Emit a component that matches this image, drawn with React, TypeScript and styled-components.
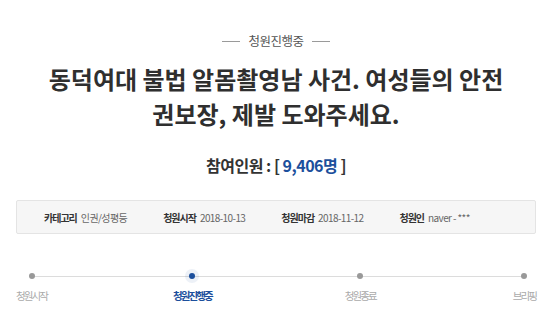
import React from "react";
import styled, { createGlobalStyle } from "styled-components";

const Global = createGlobalStyle`
  html, body { margin: 0; padding: 0; background: #fff; }
  body { font-family: "Noto Sans CJK KR", "Noto Sans", sans-serif; color: #333; }
`;

const Page = styled.div`
  width: 550px;
  height: 330px;
  box-sizing: border-box;
  padding: 0 14px 0 16px;
  display: flex;
  flex-direction: column;
  align-items: stretch;
  overflow: hidden;
`;

const Status = styled.div`
  margin-top: 31px;
  display: flex;
  align-items: center;
  justify-content: center;
  gap: 8px;
  font-size: 12.5px;
  line-height: 20px;
  color: #555;
  letter-spacing: -0.5px;
`;

const Dash = styled.span`
  width: 18px;
  height: 1px;
  background: #9a9a9a;
`;

const Title = styled.h1`
  margin: 10px 0 0;
  text-align: center;
  font-size: 24px;
  line-height: 35px;
  font-weight: 700;
  letter-spacing: 0;
  color: #2f2f2f;
`;

const Count = styled.div`
  margin-top: 22px;
  text-align: center;
  font-size: 16px;
  line-height: 24px;
  font-weight: 700;
  letter-spacing: -0.5px;
  color: #333;
`;

const Num = styled.span`
  color: #1c4f9c;
`;

const InfoBox = styled.div`
  margin-top: 23px;
  height: 34px;
  box-sizing: border-box;
  border: 1px solid #e4e4e4;
  border-radius: 2px;
  background: #f6f6f6;
  display: flex;
  align-items: center;
  padding: 0 0 0 27px;
  gap: 36px;
  font-size: 10px;
`;

const InfoItem = styled.div`
  display: flex;
  align-items: baseline;
  gap: 4px;
`;

const InfoLabel = styled.span`
  font-weight: 700;
  color: #333;
  letter-spacing: -1px;
`;

const InfoValue = styled.span`
  color: #666;
  letter-spacing: -0.6px;
`;

const Steps = styled.div`
  position: relative;
  margin-top: 35px;
  display: flex;
  justify-content: space-between;
`;

const Track = styled.div`
  position: absolute;
  left: 16px;
  right: 13px;
  top: 7px;
  height: 1px;
  background: #dcdcdc;
`;

const Step = styled.div<{ $shift?: number }>`
  position: relative;
  display: flex;
  flex-direction: column;
  align-items: center;
  gap: 9px;
  transform: translateX(${(p) => p.$shift ?? 0}px);
`;

const Dot = styled.span<{ $active?: boolean }>`
  width: 6px;
  height: 6px;
  margin-top: 4px;
  border-radius: 50%;
  background: ${(p) => (p.$active ? "#1c4f9c" : "#999")};
  box-shadow: ${(p) => (p.$active ? "0 0 0 4px rgba(28,79,156,0.08)" : "none")};
`;

const StepLabel = styled.span<{ $active?: boolean }>`
  font-size: 10.5px;
  line-height: 16px;
  letter-spacing: -1.9px;
  font-weight: ${(p) => (p.$active ? 700 : 400)};
  color: ${(p) => (p.$active ? "#1c4f9c" : "#aaa")};
`;

const steps = [
  { label: "청원시작", shift: 0 },
  { label: "청원진행중", active: true, shift: -6 },
  { label: "청원종료", shift: -5 },
  { label: "브리핑", shift: 0 },
];

export default function App() {
  return (
    <>
      <Global />
      <Page>
        <Status>
          <Dash />
          청원진행중
          <Dash />
        </Status>
        <Title>
          동덕여대 불법 알몸촬영남 사건. 여성들의 안전
          <br />
          권보장, 제발 도와주세요.
        </Title>
        <Count>
          참여인원 : [ <Num>9,406명</Num> ]
        </Count>
        <InfoBox>
          <InfoItem>
            <InfoLabel>카테고리</InfoLabel>
            <InfoValue>인권/성평등</InfoValue>
          </InfoItem>
          <InfoItem>
            <InfoLabel>청원시작</InfoLabel>
            <InfoValue>2018-10-13</InfoValue>
          </InfoItem>
          <InfoItem>
            <InfoLabel>청원마감</InfoLabel>
            <InfoValue>2018-11-12</InfoValue>
          </InfoItem>
          <InfoItem>
            <InfoLabel>청원인</InfoLabel>
            <InfoValue>naver - ***</InfoValue>
          </InfoItem>
        </InfoBox>
        <Steps>
          <Track />
          {steps.map((s) => (
            <Step key={s.label} $shift={s.shift}>
              <Dot $active={s.active} />
              <StepLabel $active={s.active}>{s.label}</StepLabel>
            </Step>
          ))}
        </Steps>
      </Page>
    </>
  );
}
